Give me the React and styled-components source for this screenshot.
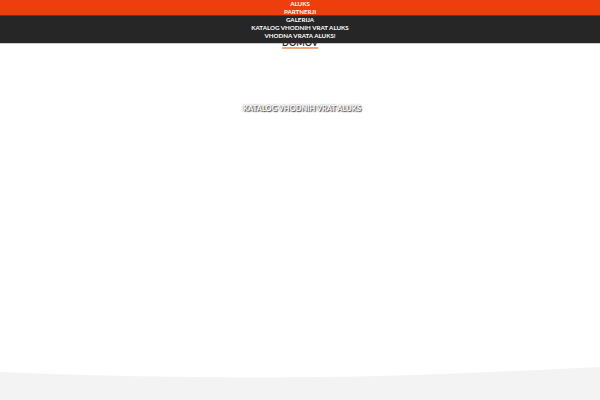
import styled, { createGlobalStyle } from "styled-components";

const GlobalStyle = createGlobalStyle`
  html, body {
    margin: 0;
    padding: 0;
    background: #ffffff;
    font-family: Lato, "Open Sans", sans-serif;
  }
`;

const Page = styled.div`
  position: relative;
  width: 600px;
  height: 400px;
  overflow: hidden;
  display: flex;
  flex-direction: column;
`;

const Header = styled.header`
  height: 44px;
  background: linear-gradient(
    to bottom,
    #ee3e0d 0,
    #ee3e0d 15px,
    #c73510 15px,
    #2a2727 16px,
    #262626 16px,
    #262626 43px,
    #cfcfcf 43px,
    #cfcfcf 44px
  );
`;

const Menu = styled.ul`
  list-style: none;
  margin: 0;
  padding: 0;
  display: flex;
  flex-direction: column;
  align-items: center;
`;

const MenuItem = styled.li`
  font-size: 6.2px;
  line-height: 8px;
  font-weight: 700;
  color: #ffffff;
  text-transform: uppercase;
  white-space: nowrap;
`;

const HomeItem = styled.li`
  margin-top: -1px;
  font-size: 9px;
  line-height: 8px;
  font-weight: 700;
  color: #2e2e2e;
  text-transform: uppercase;
  border-bottom: 2px solid #f2a77f;
`;

const Hero = styled.section`
  display: flex;
  justify-content: center;
  padding: 59px 0 0 4px;
`;

const Title = styled.h1`
  margin: 0;
  font-size: 7.5px;
  line-height: 12px;
  font-weight: 700;
  color: #ffffff;
  text-transform: uppercase;
  text-shadow: 0 0 2px #555, 1px 1px 1px #444;
`;

const Wave = styled.svg`
  position: absolute;
  left: 0;
  bottom: 0;
  width: 600px;
  height: 40px;
`;

const items = ["Aluks", "Partnerji", "Galerija", "Katalog vhodnih vrat Aluks", "Vhodna vrata Aluks!"];

export default function App() {
  return (
    <Page>
      <GlobalStyle />
      <Header>
        <Menu>
          {items.map((item) => (
            <MenuItem key={item}>{item}</MenuItem>
          ))}
          <HomeItem>Domov</HomeItem>
        </Menu>
      </Header>
      <Hero>
        <Title>Katalog vhodnih vrat Aluks</Title>
      </Hero>
      <Wave viewBox="0 0 600 40" preserveAspectRatio="none">
        <path d="M0 12 C 120 17, 250 19, 380 16 C 470 13, 540 10, 600 7 L600 40 L0 40 Z" fill="#f3f3f3" />
      </Wave>
    </Page>
  );
}
